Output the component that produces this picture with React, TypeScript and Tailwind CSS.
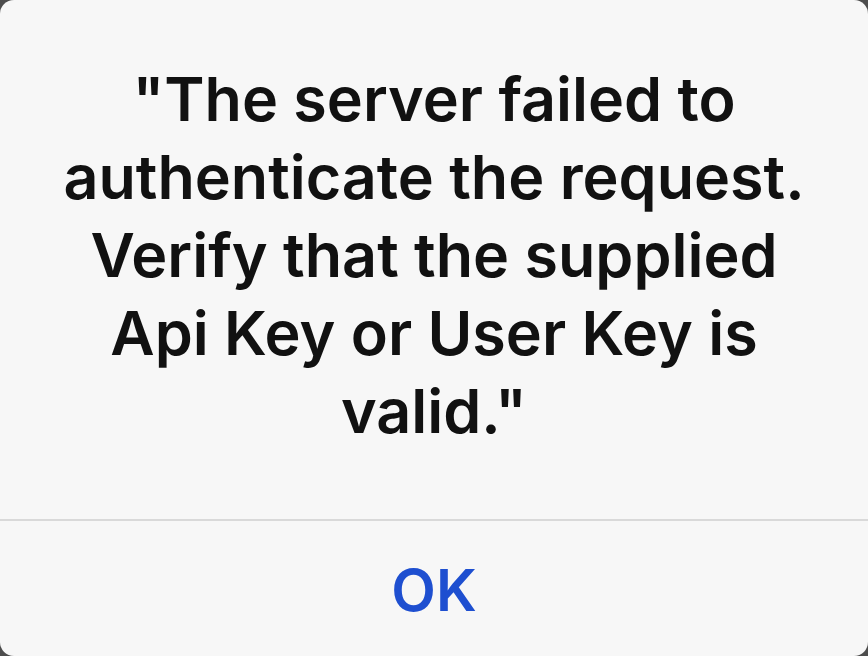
export default function App() {
  const lines = [
    '"The server failed to',
    "authenticate the request.",
    "Verify that the supplied",
    "Api Key or User Key is",
    'valid."',
  ];

  return (
    <div className="h-[656px] w-[868px] bg-[#4d4d4d]">
      <div
        className="flex h-full w-full flex-col overflow-hidden rounded-[14px] bg-[#f7f7f7]"
        style={{ fontFamily: "Inter, 'Noto Sans', sans-serif" }}
      >
        {/* message */}
        <div className="flex h-[519px] flex-col items-center pt-[60px] text-[61px] font-semibold leading-[78px] text-[#111111]">
          {lines.map((line) => (
            <div key={line} className="whitespace-nowrap">
              {line}
            </div>
          ))}
        </div>

        <div className="h-[2px] w-full bg-[#d9d9d9]" />

        {/* action */}
        <div className="flex flex-1 items-center justify-center pt-[4px]">
          <span className="text-[58px] font-semibold text-[#1e4fd0]">OK</span>
        </div>
      </div>
    </div>
  );
}
